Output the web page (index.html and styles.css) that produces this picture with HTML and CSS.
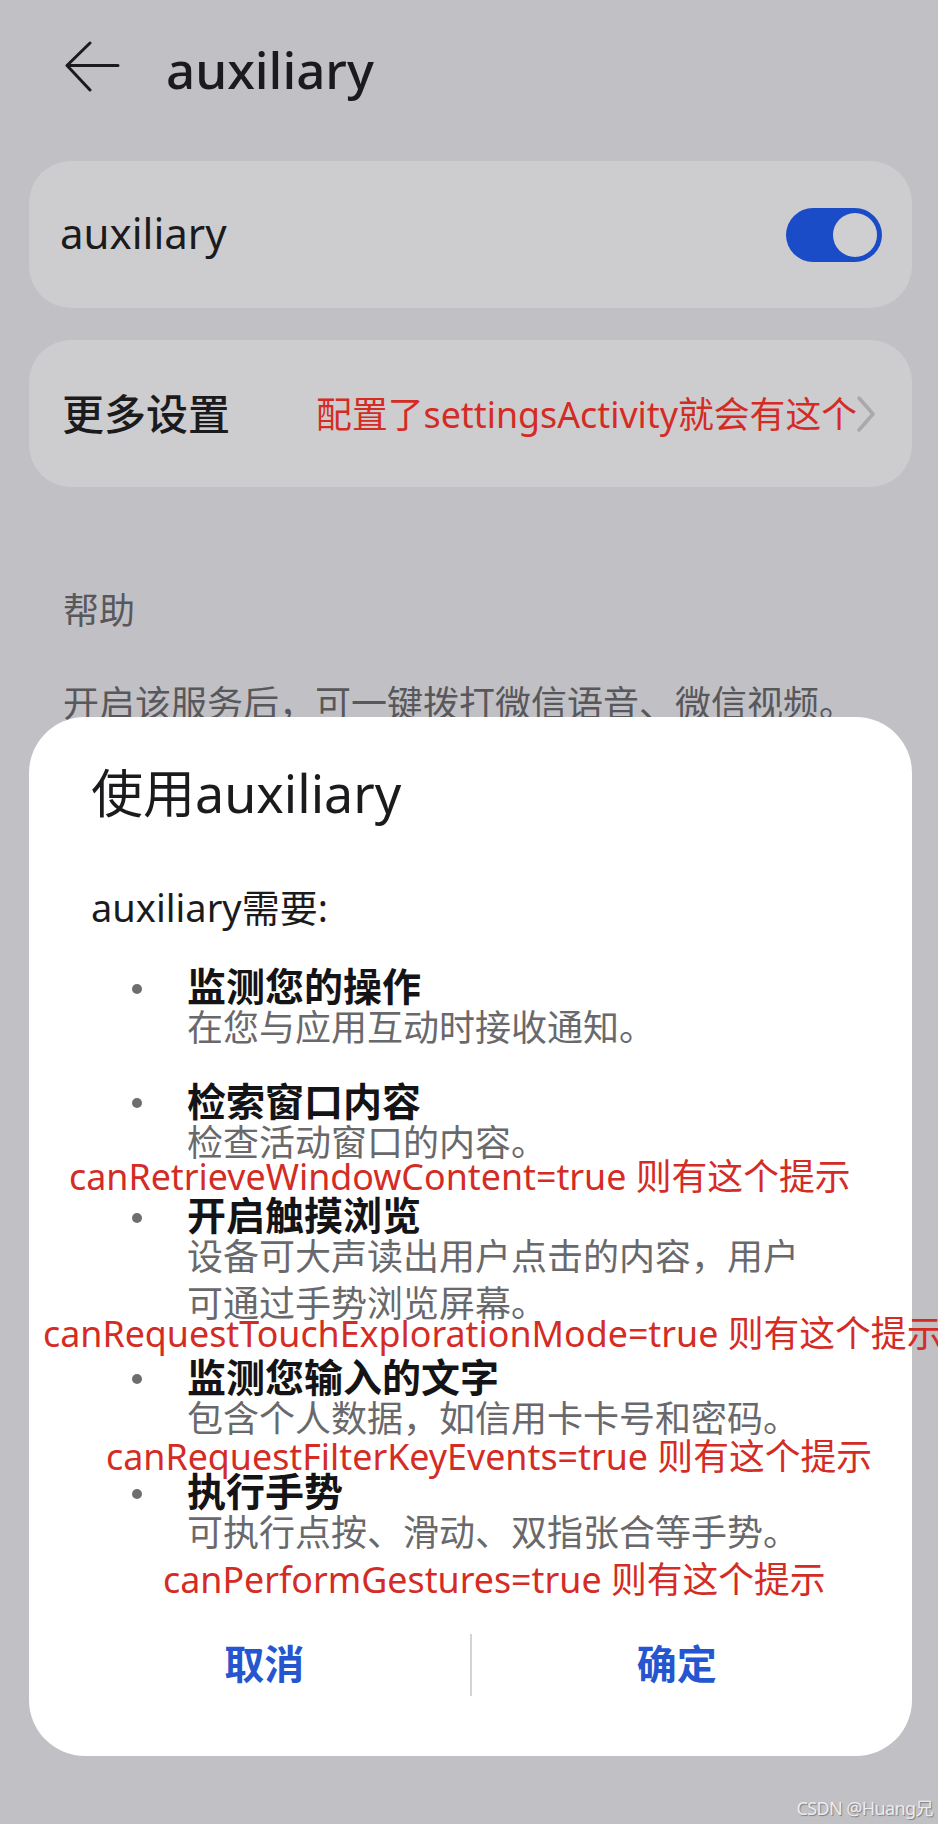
FILE: index.html
```html
<!DOCTYPE html>
<html lang="zh-CN">
<head>
<meta charset="utf-8">
<title>auxiliary</title>
<link rel="stylesheet" href="styles.css">
</head>
<body>
<div class="page">
  <header class="topbar">
    <svg class="back" width="60" height="56" viewBox="0 0 60 56">
      <path d="M28 2 L5 24.5 L28 49 M5 24.5 H56" fill="none" stroke="#1b1b1d" stroke-width="3" stroke-linecap="round" stroke-linejoin="round"/>
    </svg>
    <h1 class="title">auxiliary</h1>
  </header>

  <section class="card card-switch">
    <span class="card-label">auxiliary</span>
    <span class="toggle"><span class="knob"></span></span>
  </section>

  <section class="card card-more">
    <span class="card-label-cn">更多设置</span>
    <span class="note note-inline">配置了settingsActivity就会有这个</span>
    <svg class="chev" width="22" height="36" viewBox="0 0 22 36">
      <path d="M4 2 L18 18 L4 34" fill="none" stroke="#a9a9ac" stroke-width="3.5" stroke-linecap="round" stroke-linejoin="round"/>
    </svg>
  </section>

  <div class="help-head">帮助</div>
  <div class="help-text">开启该服务后，可一键拨打微信语音、微信视频。</div>

  <div class="dialog">
    <div class="dlg-title">使用auxiliary</div>
    <div class="dlg-sub">auxiliary需要:</div>
    <ul class="perm-list">
      <li class="perm">
        <span class="dot"></span>
        <div class="perm-body">
          <div class="perm-title">监测您的操作</div>
          <div class="perm-desc">在您与应用互动时接收通知。</div>
        </div>
      </li>
      <li class="perm">
        <span class="dot"></span>
        <div class="perm-body">
          <div class="perm-title">检索窗口内容</div>
          <div class="perm-desc">检查活动窗口的内容。</div>
        </div>
        <span class="note note-1">canRetrieveWindowContent=true 则有这个提示</span>
      </li>
      <li class="perm">
        <span class="dot"></span>
        <div class="perm-body">
          <div class="perm-title">开启触摸浏览</div>
          <div class="perm-desc">设备可大声读出用户点击的内容，用户<br>可通过手势浏览屏幕。</div>
        </div>
        <span class="note note-2">canRequestTouchExplorationMode=true 则有这个提示</span>
      </li>
      <li class="perm">
        <span class="dot"></span>
        <div class="perm-body">
          <div class="perm-title">监测您输入的文字</div>
          <div class="perm-desc">包含个人数据，如信用卡卡号和密码。</div>
        </div>
        <span class="note note-3">canRequestFilterKeyEvents=true 则有这个提示</span>
      </li>
      <li class="perm">
        <span class="dot"></span>
        <div class="perm-body">
          <div class="perm-title">执行手势</div>
          <div class="perm-desc">可执行点按、滑动、双指张合等手势。</div>
        </div>
        <span class="note note-4">canPerformGestures=true 则有这个提示</span>
      </li>
    </ul>
    <div class="actions">
      <button class="btn">取消</button>
      <span class="divider"></span>
      <button class="btn">确定</button>
    </div>
  </div>

  <div class="watermark">CSDN @Huang兄</div>
</div>
</body>
</html>
```

FILE: styles.css
```css
* { box-sizing: border-box; }
html, body {
  margin: 0;
  padding: 0;
  overflow: hidden;
}
body {
  background: #c1c0c5;
  font-family: "Noto Sans", "Noto Sans CJK SC", sans-serif;
  color: #1b1b1d;
}
.page {
  position: relative;
  width: 938px;
  height: 1824px;
  padding: 41px 26px 0 29px;
}

/* header */
.topbar {
  display: flex;
  align-items: center;
  height: 56px;
}
.back {
  display: block;
  margin-left: 33px;
  flex: none;
}
.title {
  margin: 0 0 0 44px;
  font-size: 51px;
  font-weight: 500;
  line-height: 56px;
  color: #1b1b1d;
}

/* cards */
.card {
  display: flex;
  align-items: center;
  height: 147px;
  background: #cdcdd0;
  border-radius: 42px;
}
.card-switch {
  margin-top: 64px;
  padding: 0 30px 0 31px;
  justify-content: space-between;
}
.card-label {
  font-size: 42px;
  line-height: 50px;
  padding-bottom: 4px;
}
.toggle {
  position: relative;
  display: block;
  width: 96px;
  height: 54px;
  border-radius: 27px;
  background: #1b4cc8;
}
.knob {
  position: absolute;
  right: 5px;
  top: 5px;
  width: 44px;
  height: 44px;
  border-radius: 50%;
  background: #cfcfd2;
}
.card-more {
  margin-top: 32px;
  padding: 0 35px 0 33px;
}
.card-label-cn {
  font-size: 42px;
  font-weight: 500;
  line-height: 50px;
}
.note {
  color: #d42c25;
  font-size: 35.8px;
  line-height: 40px;
  white-space: nowrap;
}
.note-inline {
  margin-left: auto;
}
.chev {
  display: block;
  flex: none;
  margin-left: -2px;
}

/* help */
.help-head {
  margin-top: 102px;
  padding-left: 34px;
  font-size: 36px;
  line-height: 44px;
  color: #58585b;
}
.help-text {
  margin-top: 49px;
  padding-left: 34px;
  font-size: 36px;
  line-height: 44px;
  color: #58585b;
  white-space: nowrap;
}

/* dialog */
.dialog {
  position: absolute;
  left: 29px;
  right: 26px;
  top: 717px;
  background: #ffffff;
  border-radius: 56px;
  padding: 46px 30px 58px 62px;
}
.dlg-title {
  font-size: 52px;
  line-height: 60px;
  color: #1b1b1d;
}
.dlg-sub {
  margin-top: 62px;
  font-size: 38px;
  line-height: 44px;
  color: #1b1b1d;
}
.perm-list {
  list-style: none;
  margin: 38px 0 0 0;
  padding: 0;
}
.perm {
  position: relative;
  display: flex;
  margin: 0 0 30.5px 41px;
}
.perm:last-child {
  margin-bottom: 0;
}
.dot {
  flex: none;
  width: 10px;
  height: 10px;
  margin-top: 16.5px;
  margin-right: 45px;
  border-radius: 50%;
  background: #6e6e70;
}
.perm-title {
  font-size: 39px;
  font-weight: 700;
  line-height: 37px;
  color: #141416;
}
.perm-desc {
  font-size: 36px;
  line-height: 47px;
  color: #69696c;
  white-space: nowrap;
}
.perm .note {
  position: absolute;
}
.note-1 { left: -63px; top: 74.5px; }
.note-2 { left: -89px; top: 117px; }
.note-3 { left: -26px; top: 78.5px; }
.note-4 { left: 31px; top: 87px; }

.actions {
  display: flex;
  align-items: center;
  height: 66px;
  margin-top: 76px;
  margin-left: -32px;
}
.btn {
  flex: 1;
  border: 0;
  background: none;
  padding: 0 0 3px 0;
  font-family: "Noto Sans", "Noto Sans CJK SC", sans-serif;
  font-size: 40px;
  font-weight: 600;
  line-height: 50px;
  color: #2556cf;
}
.divider {
  flex: none;
  width: 2px;
  height: 62px;
  background: #d4d4d6;
}

/* watermark */
.watermark {
  position: absolute;
  right: 5px;
  bottom: 4px;
  font-size: 18px;
  letter-spacing: -0.6px;
  line-height: 24px;
  color: #ececee;
  text-shadow: 1px 1px 1px rgba(0, 0, 0, 0.35);
}
```
